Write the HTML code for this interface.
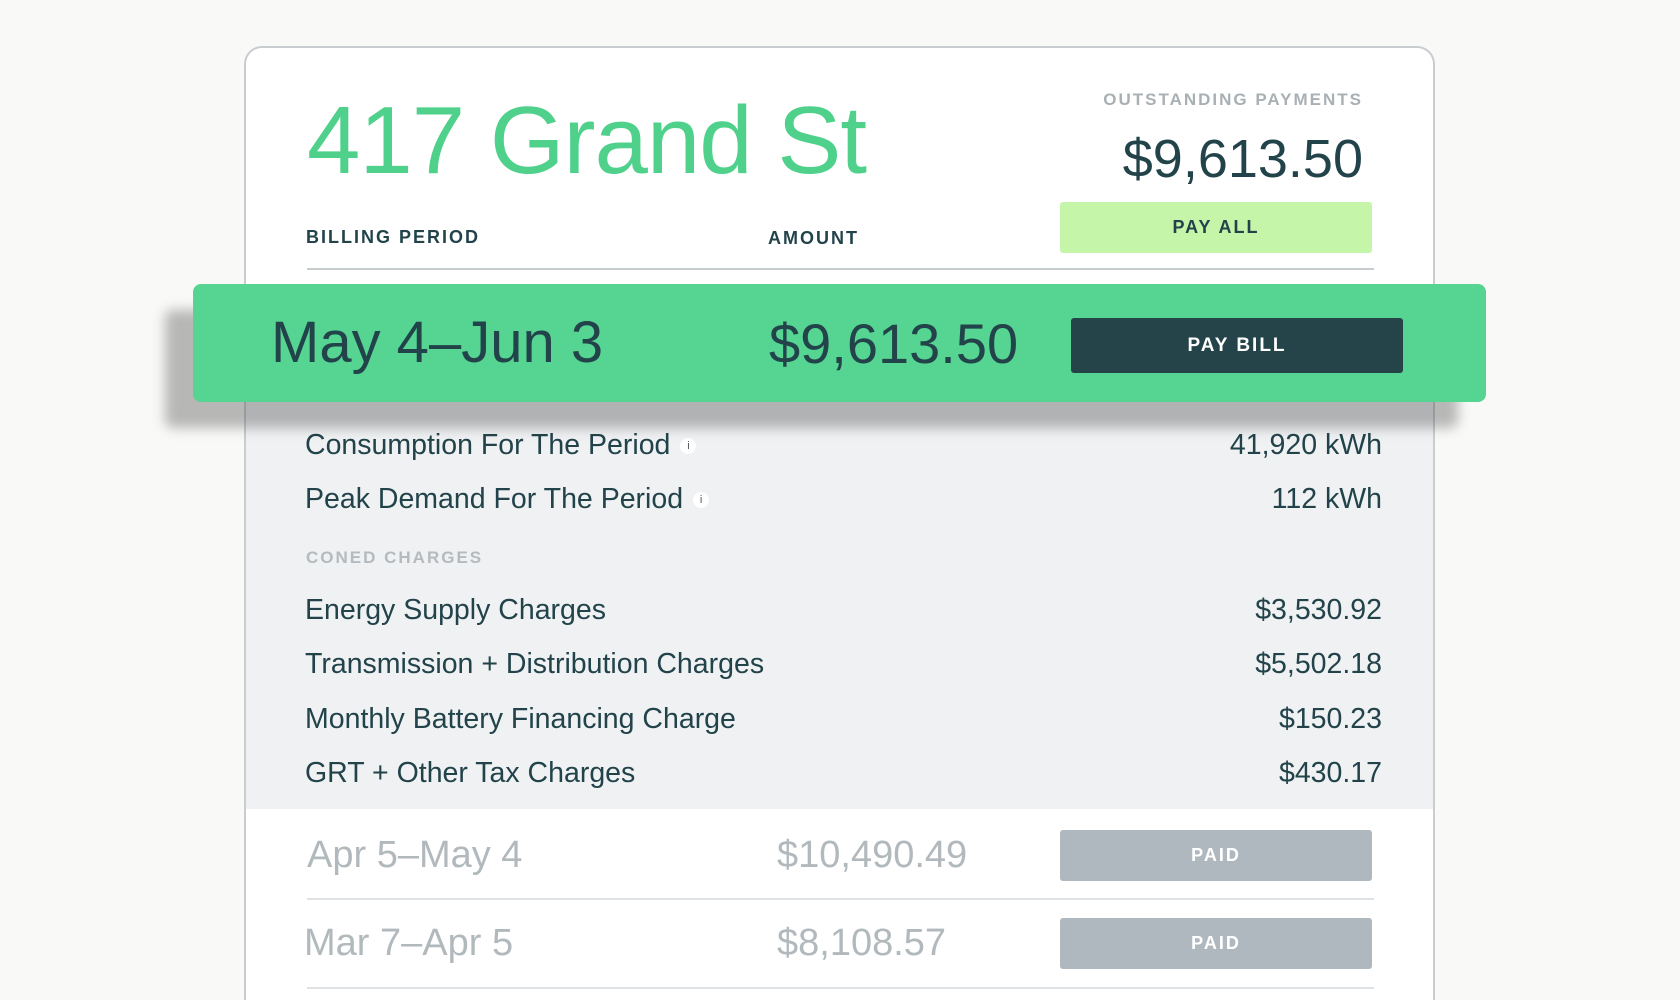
<!DOCTYPE html>
<html style="overflow:hidden;height:1000px"><head><meta charset="utf-8"><style>
*{margin:0;padding:0;box-sizing:border-box}
body{width:1680px;height:1000px;background:#f9f9f7;font-family:"Liberation Sans",sans-serif;position:relative;overflow:hidden;color:#22434a}
.card{position:absolute;left:244px;top:46px;width:1191px;height:954px;background:#fff;border:2px solid #c9cdd0;border-bottom:none;border-radius:18px 18px 0 0;overflow:hidden}
.a{position:absolute;white-space:nowrap}
.gray{position:absolute;left:0;top:308px;width:100%;height:453px;background:#eff1f3}
.lbl{font-weight:bold;font-size:18px;letter-spacing:2px}
.btn{position:absolute;display:flex;align-items:center;justify-content:center;font-weight:bold;letter-spacing:2px;border-radius:3px}
.row{font-size:28.5px;color:#22434a}
.val{right:51px;text-align:right}
.info{display:inline-block;width:16px;height:16px;border-radius:50%;background:#fff;font-size:11px;text-align:center;line-height:16px;vertical-align:middle;margin-left:10px;color:#555}
.line{position:absolute;left:61px;width:1067px;height:2px;background:#dfe2e4}
</style></head><body>
<div class="card">
<div class="a" style="left:61px;top:38px;font-size:96px;color:#4fd18b;letter-spacing:-1px">417 Grand St</div>
<div class="a lbl" style="right:70px;top:42px;color:#a9b0b4;font-size:17px">OUTSTANDING PAYMENTS</div>
<div class="a" style="right:70px;top:80px;font-size:54px">$9,613.50</div>
<div class="btn" style="left:814px;top:154px;width:312px;height:51px;background:#c4f5a8;font-size:18px">PAY ALL</div>
<div class="a lbl" style="left:60px;top:179px">BILLING PERIOD</div>
<div class="a lbl" style="left:522px;top:180px">AMOUNT</div>
<div class="line" style="top:220px;background:#c6cbce"></div>
<div class="gray">
<div class="a row" style="left:59px;top:73px">Consumption For The Period<span class="info">i</span></div>
<div class="a row val" style="top:73px">41,920 kWh</div>
<div class="a row" style="left:59px;top:127px">Peak Demand For The Period<span class="info">i</span></div>
<div class="a row val" style="top:127px">112 kWh</div>
<div class="a lbl" style="left:60px;top:192px;color:#b4babe;font-size:17px">CONED CHARGES</div>
<div class="a row" style="left:59px;top:238px">Energy Supply Charges</div>
<div class="a row val" style="top:238px">$3,530.92</div>
<div class="a row" style="left:59px;top:292px">Transmission + Distribution Charges</div>
<div class="a row val" style="top:292px">$5,502.18</div>
<div class="a row" style="left:59px;top:347px">Monthly Battery Financing Charge</div>
<div class="a row val" style="top:347px">$150.23</div>
<div class="a row" style="left:59px;top:401px">GRT + Other Tax Charges</div>
<div class="a row val" style="top:401px">$430.17</div>
</div>
<div class="a" style="left:61px;top:786px;font-size:38px;color:#b2b9bd">Apr 5–May 4</div>
<div class="a" style="left:531px;top:786px;font-size:38px;color:#b2b9bd">$10,490.49</div>
<div class="btn" style="left:814px;top:782px;width:312px;height:51px;background:#b0b8bf;color:#fff;font-size:18px">PAID</div>
<div class="line" style="top:850px"></div>
<div class="a" style="left:58px;top:874px;font-size:38px;color:#b2b9bd">Mar 7–Apr 5</div>
<div class="a" style="left:531px;top:874px;font-size:38px;color:#b2b9bd">$8,108.57</div>
<div class="btn" style="left:814px;top:870px;width:312px;height:51px;background:#b0b8bf;color:#fff;font-size:18px">PAID</div>
<div class="line" style="top:939px"></div>
</div>
<div style="position:absolute;left:193px;top:284px;width:1293px;height:118px;background:#55d492;border-radius:8px;box-shadow:-28px 26px 12px rgba(60,60,60,0.35)">
<div class="a" style="left:78px;top:25px;font-size:58px;color:#22434a">May 4–Jun 3</div>
<div class="a" style="left:576px;top:27px;font-size:56px;color:#22434a">$9,613.50</div>
<div class="btn" style="left:878px;top:34px;width:332px;height:55px;background:#24444a;color:#fff;font-size:19px">PAY BILL</div>
</div>
</body></html>
